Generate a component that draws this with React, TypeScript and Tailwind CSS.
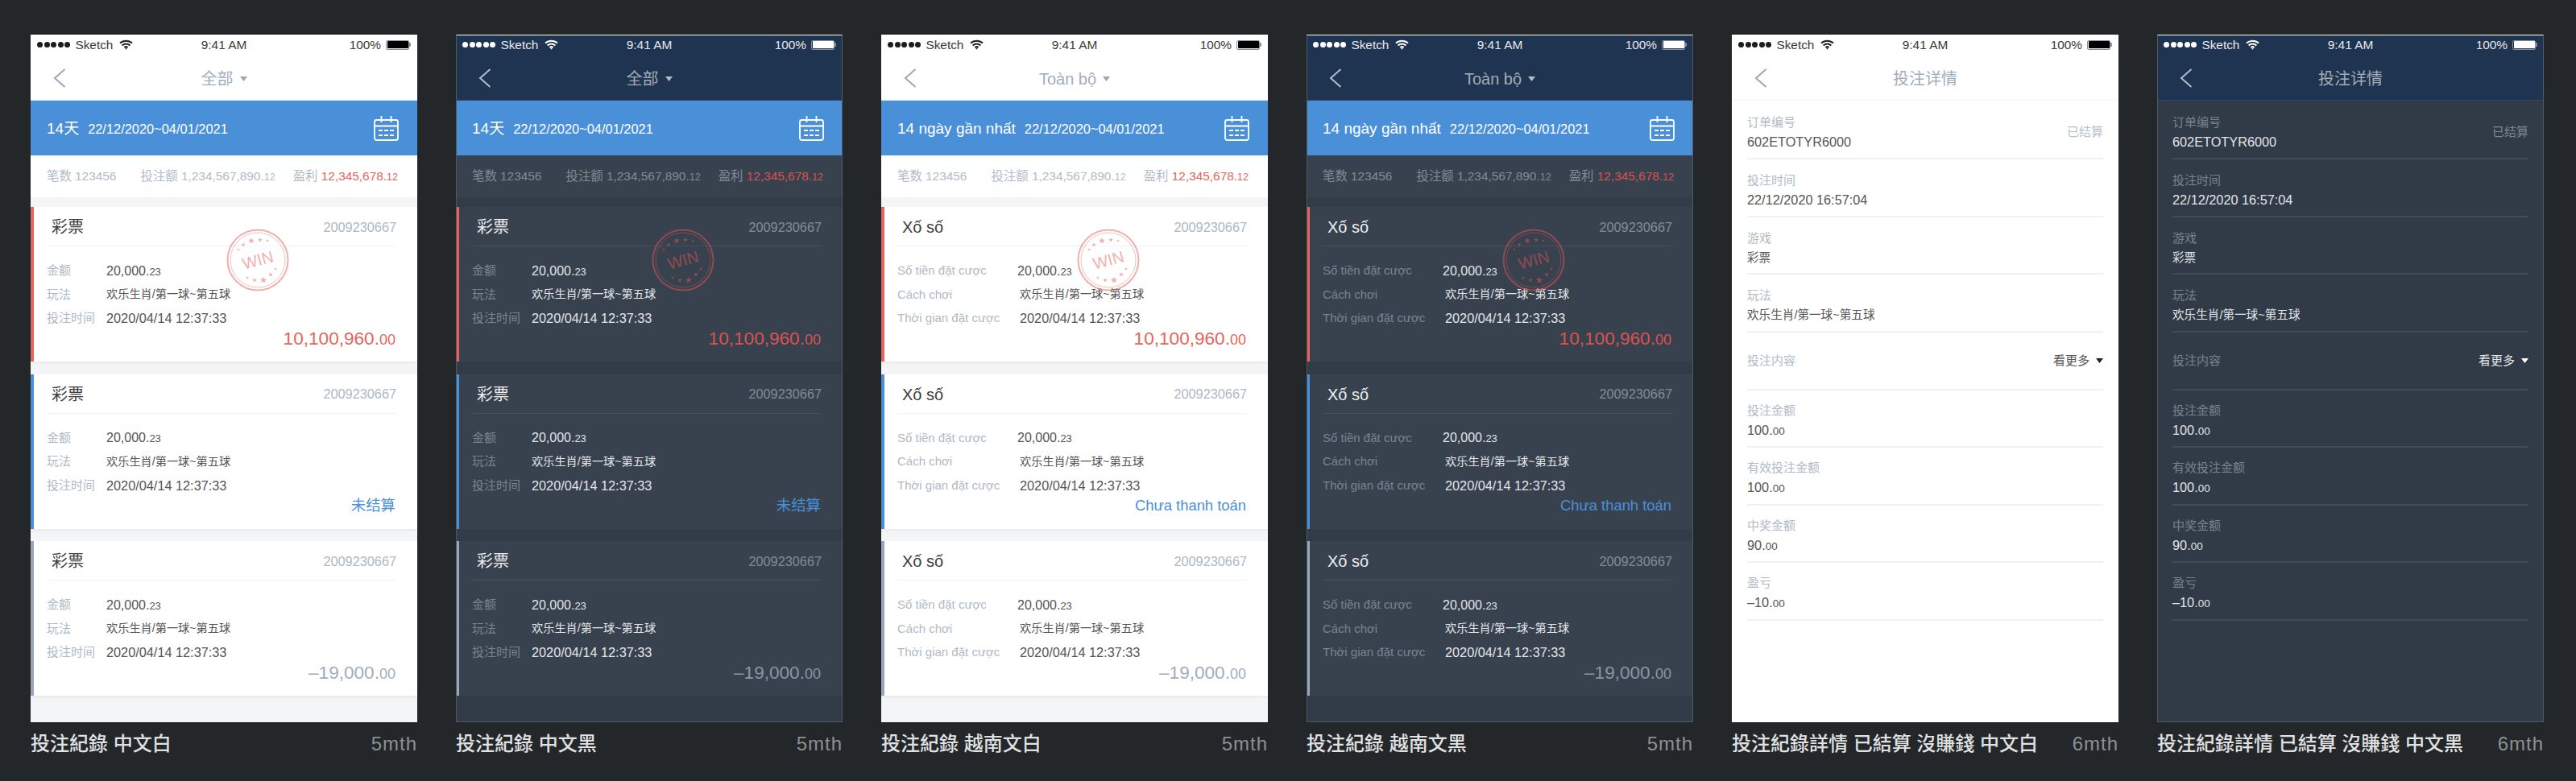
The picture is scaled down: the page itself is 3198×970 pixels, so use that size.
const light = {
  body: "bg-[#f3f5f7]",
  nav: "bg-white border-b border-[#dfe7ef]",
  navPlain: "bg-white border-b border-[#f3f4f6]",
  navTitle: "text-[#a3aebc]",
  status: "bg-white text-[#3a3a3a]",
  panel: "bg-white",
  stat: "text-[#b2bbc7]",
  red: "text-[#e5645c]",
  title: "text-[#3d3d3d]",
  order: "text-[#aeb8c5]",
  line: "border-[#f0f1f3]",
  label: "text-[#b0bac6]",
  value: "text-[#555555]",
  muted: "text-[#a1adbc]",
  card: "bg-white shadow-[0_2px_3px_rgba(0,0,0,0.05)]",
  back: "#9aa7b8",
  ink: "#222222",
  detail: "bg-white",
  detailLine: "border-[#f0f1f3]",
  settled: "text-[#b8c0cb]",
  stamp: "#e2635c",
  stampOpacity: 0.5,
};

const dark = {
  body: "bg-[#323c48]",
  nav: "bg-[#1f3450] border-b border-[#33475e]",
  navPlain: "bg-[#1f3450] border-b border-[#33475e]",
  navTitle: "text-[#a4acb6]",
  status: "bg-[#1f3450] text-[#e6e8eb]",
  panel: "bg-[#38424f]",
  stat: "text-[#808a97]",
  red: "text-[#d9534f]",
  title: "text-[#eceef0]",
  order: "text-[#808b98]",
  line: "border-[#465160]",
  label: "text-[#78838f]",
  value: "text-[#e3e5e8]",
  muted: "text-[#8a95a3]",
  card: "bg-[#38424f]",
  back: "#b4bcc6",
  ink: "#ffffff",
  detail: "bg-[#303b47]",
  detailLine: "border-[#414c59]",
  settled: "text-[#7c8692]",
  stamp: "#d9534f",
  stampOpacity: 0.55,
};

type Theme = typeof light;

const zh = {
  all: "全部",
  range: "14天",
  game: "彩票",
  amount: "金额",
  play: "玩法",
  time: "投注时间",
  pending: "未结算",
  firstCol: "w-[74px]",
  col: "w-[74px]",
};

const vi = {
  all: "Toàn bộ",
  range: "14 ngày gần nhất",
  game: "Xố số",
  amount: "Số tiền đặt cược",
  play: "Cách chơi",
  time: "Thời gian đặt cược",
  pending: "Chưa thanh toán",
  firstCol: "w-[149px]",
  col: "w-[152px]",
};

type Copy = typeof zh;

function StatusBar({ t, isDark }: { t: Theme; isDark: boolean }) {
  return (
    <div className={`grid h-[26px] shrink-0 grid-cols-3 items-center px-[8px] text-[15.4px] ${t.status}`}>
      <div className="flex items-center">
        <div className="flex gap-[1.6px]">
          {[0, 1, 2, 3, 4].map((i) => (
            <span key={i} className={`h-[7px] w-[7px] rounded-full ${isDark ? "bg-white" : "bg-[#1c1c1c]"}`} />
          ))}
        </div>
        <span className="ml-[6px]">Sketch</span>
        <svg className="ml-[8px]" width="17" height="13" viewBox="0 0 17 13" fill="none" stroke={t.ink} strokeWidth="2">
          <path d="M1 4.6a11 11 0 0 1 15 0" />
          <path d="M3.6 7.4a7.2 7.2 0 0 1 9.8 0" />
          <path d="M6.4 10a3.2 3.2 0 0 1 4.2 0" />
          <path d="M7 10.8h3l-1.5 2z" fill={t.ink} stroke="none" />
        </svg>
      </div>
      <div className="text-center">9:41 AM</div>
      <div className="flex items-center justify-end">
        <span>100%</span>
        <div className="ml-[6px] flex items-center">
          <div className="h-[12px] w-[29px] rounded-[2px] border border-[#8a8f96] p-[0.5px]">
            <div className={`h-full w-full rounded-[1px] ${isDark ? "bg-white" : "bg-black"}`} />
          </div>
          <div className="h-[5px] w-[2px] rounded-r-[1px] bg-[#8a8f96]" />
        </div>
      </div>
    </div>
  );
}

function Nav({ t, title, caret, plain }: { t: Theme; title: string; caret?: boolean; plain?: boolean }) {
  return (
    <div className={`relative flex h-[56px] shrink-0 items-center justify-center pt-[2px] ${plain ? t.navPlain : t.nav}`}>
      <svg className="absolute left-[28px] top-[16px]" width="16" height="24" viewBox="0 0 16 24" fill="none" stroke={t.back} strokeWidth="2">
        <path d="M14.5 1 2 12l12.5 11" />
      </svg>
      <span className={`text-[20px] ${t.navTitle}`}>{title}</span>
      {caret && (
        <svg className="ml-[8px]" width="9" height="6" viewBox="0 0 9 6" fill={t.back}>
          <path d="M0 0h9L4.5 6z" />
        </svg>
      )}
    </div>
  );
}

function CalendarIcon() {
  return (
    <svg width="31" height="31" viewBox="0 0 31 31" fill="none" stroke="white" strokeWidth="1.8">
      <rect x="1" y="5" width="29" height="25" rx="2.5" />
      <path d="M1 12.5h29M9.5 0v8M21.5 0v8" />
      <path d="M6 18h5M13 18h5M20 18h5M6 24h5M13 24h5M20 24h5" strokeWidth="2" />
    </svg>
  );
}

function RangeBar({ c }: { c: Copy }) {
  return (
    <div className="flex h-[68px] shrink-0 items-center justify-between bg-[#4a90d9] pl-[20px] pr-[23px] text-white">
      <div className="flex items-center pt-[2px]">
        <span className="mr-[11px] text-[19px]">{c.range}</span>
        <span className="text-[16.4px]">22/12/2020~04/01/2021</span>
      </div>
      <CalendarIcon />
    </div>
  );
}

function StatsRow({ t }: { t: Theme }) {
  return (
    <div className={`flex h-[52px] shrink-0 items-center justify-between pl-[20px] pr-[24px] text-[15.4px] ${t.panel} ${t.stat}`}>
      <span>笔数 123456</span>
      <span className="ml-[8px]">
        投注额 1,234,567,890.<span className="text-[12.5px]">12</span>
      </span>
      <span>
        盈利 <span className={t.red}>12,345,678.<span className="text-[12.5px]">12</span></span>
      </span>
    </div>
  );
}

function Stamp({ t }: { t: Theme }) {
  const stars = [
    [-24, -13, 2],
    [-18, -19, 2.6],
    [-8, -24, 4],
    [3, -25, 3],
    [12, -24, 2],
    [-13, 22, 2],
    [-4, 25, 2.8],
    [7, 25, 4.4],
    [16, 18, 3],
    [22, 11, 2],
  ];
  const star = (x: number, y: number, r: number) =>
    Array.from({ length: 10 }, (_, i) => {
      const a = -Math.PI / 2 + (i * Math.PI) / 5;
      const d = i % 2 ? r * 0.42 : r;
      return `${x + d * Math.cos(a)},${y + d * Math.sin(a)}`;
    }).join(" ");
  return (
    <svg
      className="absolute left-[239px] top-[27px]"
      width="78"
      height="78"
      viewBox="-39 -39 78 78"
      fill="none"
      stroke={t.stamp}
      opacity={t.stampOpacity}
    >
      <circle r="37.5" strokeWidth="2" />
      <circle r="34" strokeWidth="0.8" />
      {stars.map(([x, y, r], i) => (
        <polygon key={i} points={star(x, y, r)} fill={t.stamp} stroke="none" />
      ))}
      <text
        x="0"
        y="7"
        textAnchor="middle"
        fontSize="20"
        fill={t.stamp}
        stroke="none"
        transform="rotate(-15)"
        className="font-['Liberation_Sans',sans-serif]"
      >
        WIN
      </text>
    </svg>
  );
}

function Card({
  t,
  c,
  bar,
  win,
  children,
}: {
  t: Theme;
  c: Copy;
  bar: string;
  win?: boolean;
  children: React.ReactNode;
}) {
  const rows = [
    { label: c.amount, col: c.firstCol },
    { label: c.play, col: c.col },
    { label: c.time, col: c.col },
  ];
  return (
    <div className={`relative h-[192px] shrink-0 border-l-4 pl-[16px] pr-[26px] ${bar} ${t.card}`}>
      <div className={`flex h-[49px] items-center justify-between border-b pt-[2px] ${t.line}`}>
        <span className={`pl-[6px] text-[20px] ${t.title}`}>{c.game}</span>
        <span className={`text-[16.3px] ${t.order}`}>2009230667</span>
      </div>
      <div className="pt-[16px]">
        {rows.map((row, i) => (
          <div key={i} className="flex h-[29.33px] items-center">
            <span className={`shrink-0 text-[15px] ${row.col} ${t.label}`}>{row.label}</span>
            {i === 0 && (
              <span className={`text-[16px] ${t.value}`}>
                20,000.<span className="text-[13px]">23</span>
              </span>
            )}
            {i === 1 && <span className={`text-[14.2px] ${t.value}`}>欢乐生肖/第一球~第五球</span>}
            {i === 2 && <span className={`text-[16.3px] ${t.value}`}>2020/04/14 12:37:33</span>}
          </div>
        ))}
      </div>
      <div className="flex justify-end pr-[1px] pt-[2px] leading-[18px]">{children}</div>
      {win && <Stamp t={t} />}
    </div>
  );
}

function ListPhone({ t, c, isDark }: { t: Theme; c: Copy; isDark: boolean }) {
  return (
    <div className={`flex h-full flex-col ${t.body}`}>
      <StatusBar t={t} isDark={isDark} />
      <Nav t={t} title={c.all} caret />
      <RangeBar c={c} />
      <StatsRow t={t} />
      <div className="flex flex-col gap-[15.5px] pt-[12px]">
        <Card t={t} c={c} bar="border-[#e5645c]" win>
          <span className={`text-[22.6px] ${t.red}`}>
            10,100,960.<span className="text-[18px]">00</span>
          </span>
        </Card>
        <Card t={t} c={c} bar="border-[#4a90d9]">
          <span className="text-[18.4px] text-[#4a90d9]">{c.pending}</span>
        </Card>
        <Card t={t} c={c} bar="border-[#9aa7b8]">
          <span className={`text-[22.6px] ${t.muted}`}>
            –19,000.<span className="text-[18px]">00</span>
          </span>
        </Card>
      </div>
    </div>
  );
}

function Money({ whole, cents }: { whole: string; cents: string }) {
  return (
    <>
      {whole}.<span className="text-[13.5px]">{cents}</span>
    </>
  );
}

function DetailRow({ t, label, value, side }: { t: Theme; label: string; value: React.ReactNode; side?: string }) {
  return (
    <div className={`h-[71.6px] border-b-2 pt-[14px] ${t.detailLine}`}>
      <div className="flex h-[48px] items-center justify-between">
        <div>
          <div className={`text-[15px] leading-[24px] ${t.label}`}>{label}</div>
          <div className={`leading-[24px] ${t.value}`}>{value}</div>
        </div>
        {side && <span className={`text-[15px] ${t.settled}`}>{side}</span>}
      </div>
    </div>
  );
}

function DetailPhone({ t, isDark }: { t: Theme; isDark: boolean }) {
  const big = "text-[16.3px]";
  const cjk = "text-[14.6px]";
  return (
    <div className={`flex h-full flex-col ${t.detail}`}>
      <StatusBar t={t} isDark={isDark} />
      <Nav t={t} title="投注详情" plain />
      <div className="flex flex-col px-[19px] pt-[1.6px]">
        <DetailRow t={t} label="订单编号" side="已结算" value={<span className={big}>602ETOTYR6000</span>} />
        <DetailRow t={t} label="投注时间" value={<span className={big}>22/12/2020 16:57:04</span>} />
        <DetailRow t={t} label="游戏" value={<span className={cjk}>彩票</span>} />
        <DetailRow t={t} label="玩法" value={<span className={cjk}>欢乐生肖/第一球~第五球</span>} />
        <div className={`flex h-[71.6px] items-center justify-between border-b-2 ${t.detailLine}`}>
          <span className={`text-[15px] ${t.label}`}>投注内容</span>
          <span className={`flex items-center text-[15px] ${t.value}`}>
            看更多
            <svg className="ml-[8px]" width="9" height="6" viewBox="0 0 9 6" fill={t.ink}>
              <path d="M0 0h9L4.5 6z" />
            </svg>
          </span>
        </div>
        <DetailRow t={t} label="投注金额" value={<span className={big}><Money whole="100" cents="00" /></span>} />
        <DetailRow t={t} label="有效投注金额" value={<span className={big}><Money whole="100" cents="00" /></span>} />
        <DetailRow t={t} label="中奖金额" value={<span className={big}><Money whole="90" cents="00" /></span>} />
        <DetailRow t={t} label="盈亏" value={<span className={big}><Money whole="–10" cents="00" /></span>} />
      </div>
    </div>
  );
}

function Artboard({ caption, age, dark: isDark, children }: { caption: string; age: string; dark?: boolean; children: React.ReactNode }) {
  return (
    <div className="w-[480px] shrink-0">
      <div className="relative h-[854px] overflow-hidden">
        {children}
        {isDark && <div className="pointer-events-none absolute inset-0 border border-[#4d5967] border-t-white" />}
      </div>
      <div className="mt-[11px] flex items-center justify-between leading-[32px]">
        <span className="font-['Liberation_Sans','Noto_Sans_CJK_TC',sans-serif] text-[24px] font-medium text-[#e0e1e2]">{caption}</span>
        <span className="text-[24px] tracking-[1px] text-[#8d9093]">{age}</span>
      </div>
    </div>
  );
}

export default function App() {
  return (
    <div className="flex h-[970px] w-[3198px] gap-[48px] overflow-hidden bg-[#23272a] pl-[38px] pt-[43px] font-['Liberation_Sans','Noto_Sans_CJK_SC',sans-serif]">
      <Artboard caption="投注紀錄 中文白" age="5mth">
        <ListPhone t={light} c={zh} isDark={false} />
      </Artboard>
      <Artboard caption="投注紀錄 中文黑" age="5mth" dark>
        <ListPhone t={dark} c={zh} isDark />
      </Artboard>
      <Artboard caption="投注紀錄 越南文白" age="5mth">
        <ListPhone t={light} c={vi} isDark={false} />
      </Artboard>
      <Artboard caption="投注紀錄 越南文黑" age="5mth" dark>
        <ListPhone t={dark} c={vi} isDark />
      </Artboard>
      <Artboard caption="投注紀錄詳情 已結算 沒賺錢 中文白" age="6mth">
        <DetailPhone t={light} isDark={false} />
      </Artboard>
      <Artboard caption="投注紀錄詳情 已結算 沒賺錢 中文黑" age="6mth" dark>
        <DetailPhone t={dark} isDark />
      </Artboard>
    </div>
  );
}
